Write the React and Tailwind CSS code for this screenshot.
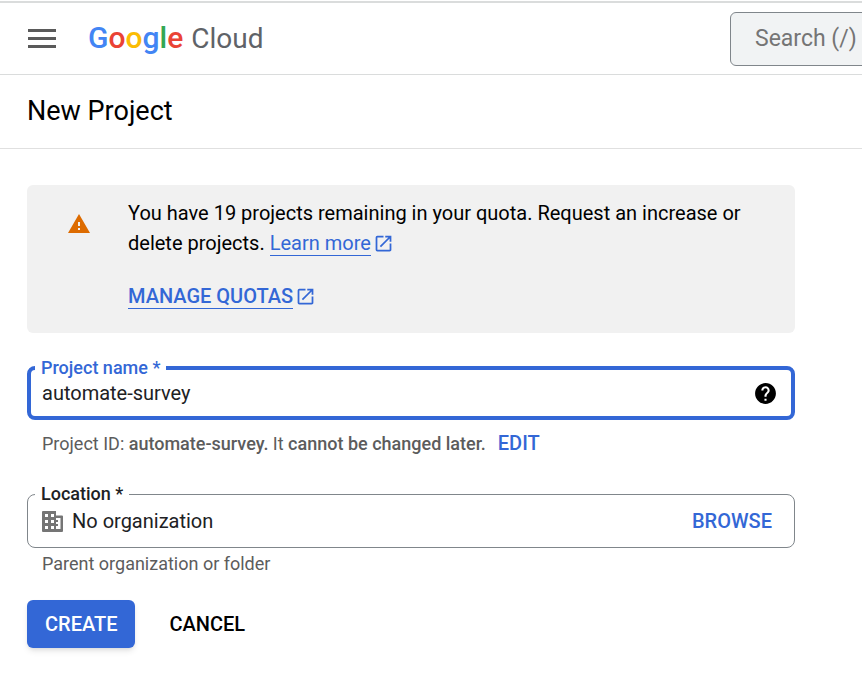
import { useState } from "react";
import { MdHelp, MdOpenInNew, MdWarning } from "react-icons/md";

function ExternalLink({ children, className = "" }) {
  return (
    <a href="#" className={`inline-flex items-center gap-[2px] text-[#3367d6] ${className}`}>
      <span className="border-b border-[#3367d6] leading-6">{children}</span>
      <MdOpenInNew size={21} aria-hidden="true" />
    </a>
  );
}

function OrganizationIcon() {
  return (
    <svg width="21" height="21" viewBox="0 0 21 21" fill="#757575" fillRule="evenodd" aria-hidden="true">
      <path d="M1 0h13v4.500h6a1 1 0 0 1 1 1V20a1 1 0 0 1-1 1H1a1 1 0 0 1-1-1V1a1 1 0 0 1 1-1zM3 3v3h3V3zM9 3v3h3V3zM3 9v3h3V9zM9 9v3h3V9zM3 15v3h3v-3zM9 15v3h3v-3zM14 7v2h2v2h-2v2h2v2h-2v3h4.500V7z" />
    </svg>
  );
}

function Logo() {
  return (
    <a href="#" aria-label="Google Cloud" className="flex items-baseline gap-2 leading-9">
      <span className="text-[30px] font-medium">
        <span className="text-[#4285f4]">G</span>
        <span className="text-[#ea4335]">o</span>
        <span className="text-[#fbbc04]">o</span>
        <span className="text-[#4285f4]">g</span>
        <span className="text-[#34a853]">l</span>
        <span className="text-[#ea4335]">e</span>
      </span>
      <span className="text-[28px] text-[#5f6368]">Cloud</span>
    </a>
  );
}

function Header() {
  return (
    <header className="mt-px flex h-[74px] items-center overflow-hidden border-t-2 border-b border-[#dadcdc] pl-7">
      <button type="button" aria-label="Navigation menu" className="flex w-7 shrink-0 flex-col gap-[5px]">
        <span className="h-[3px] bg-[#5a5a5a]" />
        <span className="h-[3px] bg-[#5a5a5a]" />
        <span className="h-[3px] bg-[#5a5a5a]" />
      </button>
      <div className="ml-8 w-[642px] shrink-0">
        <Logo />
      </div>
      <input
        type="search"
        aria-label="Search"
        placeholder="Search (/) for resources, docs, products, and more"
        className="h-[54px] w-[640px] shrink-0 rounded-md border border-[#80868b] bg-[#f1f3f4] px-6 text-[23px] placeholder:text-[#757575]"
      />
    </header>
  );
}

function QuotaNotice() {
  return (
    <section className="flex rounded-md bg-[#f1f1f1] pt-[13px] pr-10 pb-[22px] pl-10 text-xl leading-[30px]">
      <MdWarning size={24} className="mt-[14px] mr-[37px] shrink-0 text-[#dd6b00]" aria-hidden="true" />
      <div>
        <p>
          You have 19 projects remaining in your quota. Request an increase or delete projects.{" "}
          <ExternalLink>Learn more</ExternalLink>
        </p>
        <p className="mt-[23px]">
          <ExternalLink className="font-medium">MANAGE QUOTAS</ExternalLink>
        </p>
      </div>
    </section>
  );
}

export default function App() {
  const [name, setName] = useState("automate-survey");
  return (
    <div className="min-h-screen bg-white font-['Roboto',sans-serif] text-black">
      <Header />
      <div className="flex h-[74px] items-center border-b border-[#e0e0e0] px-[27px]">
        <h1 className="text-[27px]">New Project</h1>
      </div>
      <main className="px-[27px] pt-9 pb-8">
        <form className="max-w-3xl" onSubmit={(e) => e.preventDefault()}>
          <QuotaNotice />

          <fieldset className="mt-[25px] rounded-lg border-4 border-[#3367d6] px-1 pb-2">
            <legend className="px-[6px] text-lg leading-5 font-medium text-[#3367d6]">
              <label htmlFor="project-name">Project name *</label>
            </legend>
            <div className="flex h-[30px] items-center pr-[9px] pl-[7px]">
              <input
                id="project-name"
                value={name}
                onChange={(e) => setName(e.target.value)}
                className="min-w-0 flex-1 text-xl text-[#202124] outline-none"
              />
              <button type="button" aria-label="Help">
                <MdHelp size={25} />
              </button>
            </div>
          </fieldset>
          <p className="mt-[11px] pl-[15px] text-lg leading-6 text-[#5c5c5c]">
            Project ID: <b className="font-medium">automate-survey.</b> It{" "}
            <b className="font-medium">cannot be changed later.</b>
            <button type="button" className="ml-3 text-xl leading-6 font-medium text-[#3367d6]">EDIT</button>
          </p>

          <fieldset className="mt-7 rounded-lg border border-[#80868b] px-[7px] pb-[9px]">
            <legend className="px-[6px] text-lg leading-5 font-medium text-[#202124]">
              <label htmlFor="location">Location *</label>
            </legend>
            <div className="flex h-[34px] items-center pr-[15px] pl-[7px]">
              <OrganizationIcon />
              <input
                id="location"
                readOnly
                value="No organization"
                className="ml-[9px] min-w-0 flex-1 text-xl text-[#202124] outline-none"
              />
              <button type="button" className="text-xl font-medium text-[#3367d6]">BROWSE</button>
            </div>
          </fieldset>
          <p className="mt-1 pl-[15px] text-lg leading-6 text-[#5c5c5c]">Parent organization or folder</p>

          <div className="mt-6 flex gap-4 text-xl font-medium">
            <button type="submit" className="h-12 rounded-md bg-[#3367d6] px-[18px] text-white shadow-md">CREATE</button>
            <button type="button" className="h-12 px-[18px]">CANCEL</button>
          </div>
        </form>
      </main>
    </div>
  );
}
